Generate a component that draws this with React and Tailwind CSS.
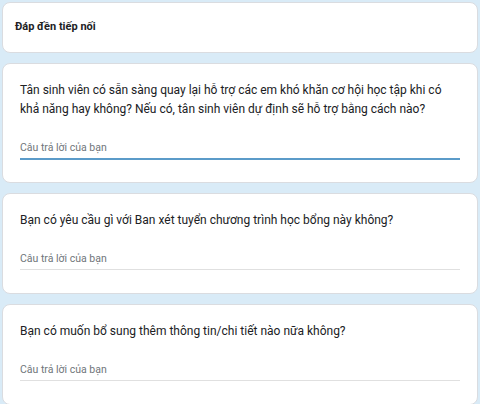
const questions = [
  {
    id: 1,
    text: 'Tân sinh viên có sẵn sàng quay lại hỗ trợ các em khó khăn cơ hội học tập khi có khả năng hay không? Nếu có, tân sinh viên dự định sẽ hỗ trợ bằng cách nào?',
    focused: true,
  },
  { id: 2, text: 'Bạn có yêu cầu gì với Ban xét tuyển chương trình học bổng này không?' },
  { id: 3, text: 'Bạn có muốn bổ sung thêm thông tin/chi tiết nào nữa không?' },
];

const QuestionCard = ({ text, focused }) => (
  <div className="bg-white border border-[#dadce0] rounded-lg px-[17px] pt-[17px] pb-[22px]">
    <p className="text-[12px] leading-[19px] text-[#202124]">{text}</p>
    {/* Short answer field */}
    <div
      className={
        focused
          ? 'mt-[22px] pb-[3px] border-b-2 border-[#5b9bc9]'
          : 'mt-[22px] pb-[3px] border-b border-[#e0e0e0] mb-[1px]'
      }
    >
      <p className="text-[10.5px] leading-[14px] text-[#70757a]">Câu trả lời của bạn</p>
    </div>
  </div>
);

export default function App() {
  return (
    <div
      className="min-h-[404px] bg-[#d9ebf7] pt-[2px] pl-[2px] pr-[2px] flex flex-col gap-[10px]"
      style={{ fontFamily: 'Roboto, "Noto Sans", sans-serif' }}
    >
      <div className="bg-white border border-[#dadce0] rounded-lg px-[12px] pt-[17px] pb-[18px]">
        <h2 className="text-[11px] leading-[14px] font-bold text-[#202124]">Đáp đền tiếp nối</h2>
      </div>

      {questions.map((q) => (
        <QuestionCard key={q.id} text={q.text} focused={q.focused} />
      ))}
    </div>
  );
}
